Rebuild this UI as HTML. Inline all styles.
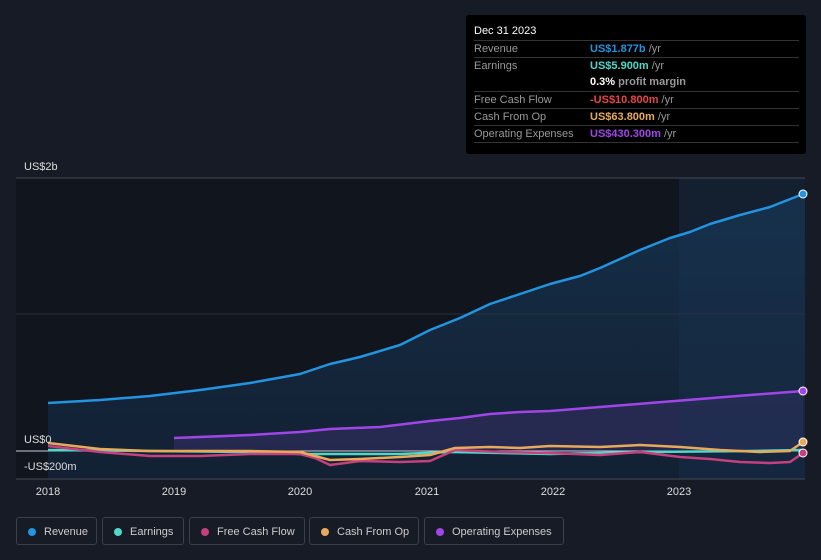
<!DOCTYPE html><html><head><style>
body{margin:0;width:821px;height:560px;background:#161b25;font-family:"Liberation Sans",sans-serif;overflow:hidden;position:relative}
.tt{position:absolute;left:466px;top:15px;width:340px;height:139px;background:#000;border-radius:3px}
.tt .h{color:#fff;font-size:11px;position:absolute;left:8px;top:10px}
.row{position:absolute;left:8px;width:325px;font-size:11px;color:#999;border-top:1px solid #333;height:16px;line-height:17px}
.row span{position:absolute;left:116px}
.u{color:#999}
.leg{position:absolute;top:517px;height:28px;border:1px solid #3a3f4a;border-radius:3px;font-size:11px;color:#ccc;line-height:28px;box-sizing:border-box;padding-left:27px}
.leg i{position:absolute;left:11px;top:10px;width:8px;height:8px;border-radius:50%}
</style></head><body>
<svg width="821" height="560" style="position:absolute;left:0;top:0">
<defs><linearGradient id="rg" x1="0" y1="0" x2="0" y2="1"><stop offset="0" stop-color="#17446a" stop-opacity=".8"/><stop offset="1" stop-color="#163050" stop-opacity=".6"/></linearGradient></defs>
<rect x="16" y="178" width="789" height="301" fill="#11151e"/>
<path d="M48,403 L100,400 150,396 200,390 250,383 300,374 330,364 360,357 400,345 430,330 460,318 490,304 520,294 550,284 580,276 600,268 640,250 670,238 690,232 710,224 740,215 770,207 803,194 L805,194 805,479 48,479Z" fill="url(#rg)" opacity=".7"/>
<path d="M174,438 L250,435 300,432 330,429 380,427 430,421 460,418 490,414 520,412 550,411 600,407 650,403 700,399 750,395 803,391 L803,451 174,451Z" fill="#3a2f6a" opacity=".5"/>
<rect x="679" y="178" width="126" height="301" fill="#1a3552" opacity=".35"/>
<line x1="16" y1="178" x2="805" y2="178" stroke="#444a55"/>
<line x1="16" y1="314" x2="805" y2="314" stroke="#2a303a"/>
<line x1="16" y1="451" x2="805" y2="451" stroke="#c8ccd2"/>
<line x1="16" y1="479" x2="805" y2="479" stroke="#444a55"/>
<g fill="none" stroke-width="2.5" stroke-linejoin="round">
<path d="M48,450 L150,451 250,452 300,454 400,454 450,452 550,454 650,452 750,451 803,450" stroke="#4fd8c8"/>
<path d="M48,446 L100,452 150,456 200,456 250,454 300,454 315,458 330,465 360,461 400,462 430,461 455,450 500,452 550,453 600,455 640,452 680,457 710,459 740,462 770,463 790,462 803,453" stroke="#c4407e"/>
<path d="M48,443 L100,449 150,451 250,451 300,452 315,456 330,460 360,459 400,457 430,455 455,448 490,447 520,448 550,446 600,447 640,445 680,447 720,450 760,452 790,451 803,442" stroke="#e8aa5a"/>
<path d="M174,438 L250,435 300,432 330,429 380,427 430,421 460,418 490,414 520,412 550,411 600,407 650,403 700,399 750,395 803,391" stroke="#a046e8"/>
<path d="M48,403 L100,400 150,396 200,390 250,383 300,374 330,364 360,357 400,345 430,330 460,318 490,304 520,294 550,284 580,276 600,268 640,250 670,238 690,232 710,224 740,215 770,207 803,194" stroke="#2394e0"/>
</g>
<circle cx="803" cy="194" r="4" fill="#2394e0" stroke="#fff" stroke-width="1"/>
<circle cx="803" cy="391" r="4" fill="#a046e8" stroke="#fff" stroke-width="1"/>
<circle cx="803" cy="442" r="4" fill="#e8aa5a" stroke="#fff" stroke-width="1"/>
<circle cx="803" cy="453" r="4" fill="#c4407e" stroke="#fff" stroke-width="1"/>
<g font-size="11" fill="#ddd" font-family="Liberation Sans">
<text x="24" y="170">US$2b</text><text x="24" y="443">US$0</text><text x="24" y="470">-US$200m</text>
<g text-anchor="middle"><text x="48" y="495">2018</text><text x="174" y="495">2019</text><text x="300" y="495">2020</text><text x="427" y="495">2021</text><text x="553" y="495">2022</text><text x="679" y="495">2023</text></g>
</g></svg>
<div class="tt"><div class="h">Dec 31 2023</div>
<div class="row" style="top:25px">Revenue<span style="color:#2394e0;font-weight:bold">US$1.877b <b class="u" style="font-weight:normal">/yr</b></span></div>
<div class="row" style="top:42px">Earnings<span style="color:#4fd8c8;font-weight:bold">US$5.900m <b class="u" style="font-weight:normal">/yr</b></span></div>
<div class="row" style="top:59px;border-top:none"><span style="color:#fff;font-weight:bold">0.3% <b class="u">profit margin</b></span></div>
<div class="row" style="top:76px">Free Cash Flow<span style="color:#e84545;font-weight:bold">-US$10.800m <b class="u" style="font-weight:normal">/yr</b></span></div>
<div class="row" style="top:93px">Cash From Op<span style="color:#e8aa5a;font-weight:bold">US$63.800m <b class="u" style="font-weight:normal">/yr</b></span></div>
<div class="row" style="top:110px;border-bottom:1px solid #333">Operating Expenses<span style="color:#a046e8;font-weight:bold">US$430.300m <b class="u" style="font-weight:normal">/yr</b></span></div>
</div>
<div class="leg" style="left:16px;width:81px"><i style="background:#2394e0"></i>Revenue</div>
<div class="leg" style="left:102px;width:82px"><i style="background:#4fd8c8"></i>Earnings</div>
<div class="leg" style="left:189px;width:116px"><i style="background:#c4407e"></i>Free Cash Flow</div>
<div class="leg" style="left:309px;width:110px"><i style="background:#e8aa5a"></i>Cash From Op</div>
<div class="leg" style="left:424px;width:140px"><i style="background:#a046e8"></i>Operating Expenses</div>
</body></html>
